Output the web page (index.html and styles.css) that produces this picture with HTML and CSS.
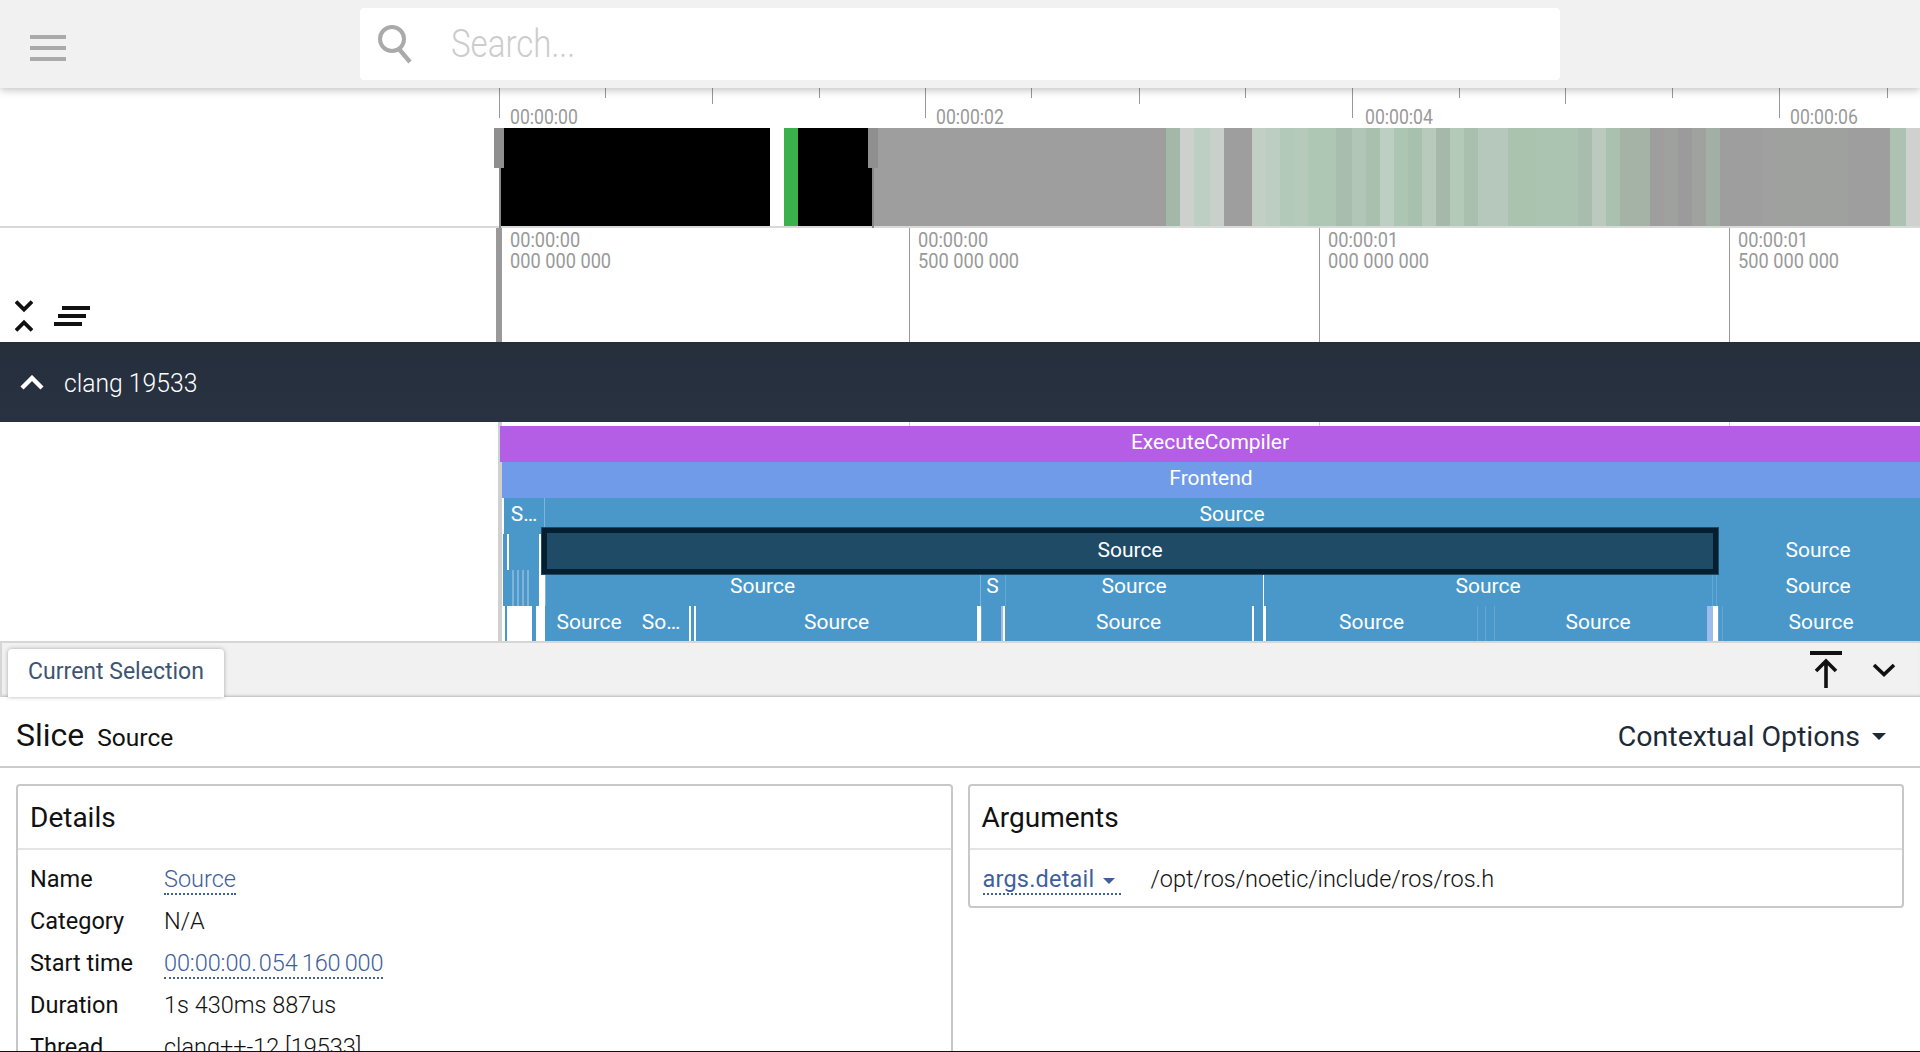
FILE: index.html
```html
<!DOCTYPE html>
<html lang="en">
<head>
<meta charset="utf-8">
<title>Perfetto UI</title>
<link rel="stylesheet" href="styles.css">
</head>
<body>
<div class="app">
  <main class="viewer">
    <section class="overview">
      <div class="tick major" style="left:499px"></div>
      <div class="tick small" style="left:605px"></div>
      <div class="tick medium" style="left:712px"></div>
      <div class="tick small" style="left:819px"></div>
      <div class="tick major" style="left:925px"></div>
      <div class="tick small" style="left:1031px"></div>
      <div class="tick medium" style="left:1139px"></div>
      <div class="tick small" style="left:1245px"></div>
      <div class="tick major" style="left:1352px"></div>
      <div class="tick small" style="left:1459px"></div>
      <div class="tick medium" style="left:1565px"></div>
      <div class="tick small" style="left:1672px"></div>
      <div class="tick major" style="left:1779px"></div>
      <div class="tick small" style="left:1887px"></div>
      <span class="time-label" style="left:510px">00:00:00</span>
      <span class="time-label" style="left:936px">00:00:02</span>
      <span class="time-label" style="left:1365px">00:00:04</span>
      <span class="time-label" style="left:1790px">00:00:06</span>
      <div class="heat">
        <i style="left:500px;width:270px;background:#000"></i>
        <i style="left:784px;width:14px;background:#3ab14a"></i>
        <i style="left:798px;width:74px;background:#000"></i>
        <i style="left:872px;width:294px;background:#9e9e9e"></i>
        <i style="left:1166px;width:14px;background:#a3b8a8"></i>
        <i style="left:1180px;width:14px;background:#cdd0cd"></i>
        <i style="left:1194px;width:16px;background:#bdcec2"></i>
        <i style="left:1210px;width:14px;background:#c9cfca"></i>
        <i style="left:1224px;width:28px;background:#9e9e9e"></i>
        <i style="left:1252px;width:14px;background:#c2cfc5"></i>
        <i style="left:1266px;width:14px;background:#bccec1"></i>
        <i style="left:1280px;width:14px;background:#b2c8b8"></i>
        <i style="left:1294px;width:14px;background:#b5cabb"></i>
        <i style="left:1308px;width:28px;background:#aec6b4"></i>
        <i style="left:1336px;width:16px;background:#a8bdad"></i>
        <i style="left:1352px;width:14px;background:#b1c6b6"></i>
        <i style="left:1366px;width:14px;background:#a9c0ae"></i>
        <i style="left:1380px;width:14px;background:#bdcec2"></i>
        <i style="left:1394px;width:14px;background:#adc6b3"></i>
        <i style="left:1408px;width:14px;background:#a8c1ae"></i>
        <i style="left:1422px;width:14px;background:#b8cabc"></i>
        <i style="left:1436px;width:14px;background:#a6b8aa"></i>
        <i style="left:1450px;width:14px;background:#b4cab9"></i>
        <i style="left:1464px;width:14px;background:#a9c0ae"></i>
        <i style="left:1478px;width:30px;background:#b6c8bb"></i>
        <i style="left:1508px;width:28px;background:#a9c3af"></i>
        <i style="left:1536px;width:42px;background:#abc4b1"></i>
        <i style="left:1578px;width:14px;background:#a8bdad"></i>
        <i style="left:1592px;width:14px;background:#bcc9bf"></i>
        <i style="left:1606px;width:14px;background:#abc1b0"></i>
        <i style="left:1620px;width:30px;background:#a5b3a7"></i>
        <i style="left:1650px;width:14px;background:#9e9e9e"></i>
        <i style="left:1664px;width:14px;background:#9fa19f"></i>
        <i style="left:1678px;width:14px;background:#9b9b9b"></i>
        <i style="left:1692px;width:14px;background:#a0a2a0"></i>
        <i style="left:1706px;width:14px;background:#a1afa4"></i>
        <i style="left:1720px;width:42px;background:#9e9e9e"></i>
        <i style="left:1762px;width:16px;background:#a0a0a0"></i>
        <i style="left:1778px;width:70px;background:#9ea19e"></i>
        <i style="left:1848px;width:42px;background:#9e9e9e"></i>
        <i style="left:1890px;width:16px;background:#adc2b2"></i>
        <i style="left:1906px;width:14px;background:#cfd1cf"></i>
      </div>
      <div class="handle-line" style="left:499px"></div>
      <div class="handle-line" style="left:872px"></div>
      <div class="handle" style="left:494px"></div>
      <div class="handle" style="left:868px"></div>
    </section>

    <section class="ruler">
      <div class="ruler-tools">
        <svg class="icon-collapse" viewBox="0 0 18 32" width="18" height="32"><path d="M1 1.500 9 9.500 17 1.500M1 30.500 9 22.500 17 30.500" fill="none" stroke="#111" stroke-width="3.800"/></svg>
        <svg class="icon-filter" viewBox="0 0 36 20" width="36" height="20"><path d="M8 0h28v4H8zM4 8h28v4H4zM0 16h28v4H0z" fill="#111"/></svg>
      </div>
      <div class="ruler-line thick"></div>
      <div class="ruler-line" style="left:909px"></div>
      <div class="ruler-line" style="left:1319px"></div>
      <div class="ruler-line" style="left:1729px"></div>
      <span class="ruler-label" style="left:510px">00:00:00<br>000 000 000</span>
      <span class="ruler-label" style="left:918px">00:00:00<br>500 000 000</span>
      <span class="ruler-label" style="left:1328px">00:00:01<br>000 000 000</span>
      <span class="ruler-label" style="left:1738px">00:00:01<br>500 000 000</span>
    </section>

    <section class="process">
      <svg class="icon-up" viewBox="0 0 24 15" width="24" height="15"><path d="M2 13 12 3 22 13" fill="none" stroke="#fff" stroke-width="4.400"/></svg>
      <span class="process-name">clang 19533</span>
    </section>

    <section class="tracks">
      <div class="track-line" style="left:909px"></div>
      <div class="track-line" style="left:1319px"></div>
      <div class="track-line" style="left:1729px"></div>
      <div class="track-grid"></div>
      <div class="slice exec" style="left:500px;width:1420px;top:4px">ExecuteCompiler</div>
      <div class="slice front" style="left:502px;width:1418px;top:40px">Frontend</div>

      <div class="slice src" style="left:504px;width:40px;top:76px">S…</div>
      <div class="slice src sep" style="left:544px;width:1376px;top:76px">Source</div>

      <div class="slice src" style="left:503px;width:4px;top:112px"></div>
      <div class="slice src" style="left:509px;width:30px;top:112px"></div>
      <div class="slice src" style="left:1716px;width:204px;top:112px">Source</div>

      <div class="slice src" style="left:503px;width:9px;top:148px"></div>
      <div class="slice streak" style="left:512px;width:18px;top:148px"></div>
      <div class="slice src" style="left:530px;width:9px;top:148px"></div>
      <div class="slice src sep" style="left:545px;width:435px;top:148px">Source</div>
      <div class="slice src sep" style="left:980px;width:25px;top:148px">S</div>
      <div class="slice src sep-faint" style="left:1005px;width:258px;top:148px">Source</div>
      <div class="slice src" style="left:1264px;width:448px;top:148px">Source</div>
      <div class="slice src sep-faint" style="left:1712px;width:4px;top:148px"></div>
      <div class="slice src sep-faint" style="left:1716px;width:204px;top:148px">Source</div>

      <div class="slice src low" style="left:505px;width:2px;top:184px"></div>
      <div class="slice src low" style="left:532px;width:4px;top:184px"></div>
      <div class="slice src low" style="left:545px;width:88px;top:184px">Source</div>
      <div class="slice src low" style="left:633px;width:56px;top:184px">So…</div>
      <div class="slice src low" style="left:691px;width:3px;top:184px"></div>
      <div class="slice src low" style="left:696px;width:281px;top:184px">Source</div>
      <div class="slice src low sep-faint" style="left:981px;width:20px;top:184px"></div>
      <div class="slice peri low" style="left:1001px;width:2px;top:184px"></div>
      <div class="slice src low" style="left:1005px;width:247px;top:184px">Source</div>
      <div class="slice src low" style="left:1254px;width:9px;top:184px"></div>
      <div class="slice src low" style="left:1266px;width:211px;top:184px">Source</div>
      <div class="slice src low sep-faint" style="left:1477px;width:8px;top:184px"></div>
      <div class="slice src low sep-faint" style="left:1485px;width:9px;top:184px"></div>
      <div class="slice src low sep-faint" style="left:1494px;width:208px;top:184px">Source</div>
      <div class="slice src low" style="left:1702px;width:5px;top:184px"></div>
      <div class="slice peri low" style="left:1707px;width:6px;top:184px"></div>
      <div class="slice src low sep-faint" style="left:1718px;width:4px;top:184px"></div>
      <div class="slice src low sep-faint" style="left:1722px;width:198px;top:184px">Source</div>

      <div class="selected">Source</div>
    </section>

    <section class="drawer">
      <header class="tabbar">
        <div class="tab">Current Selection</div>
        <div class="tab-actions">
          <svg viewBox="0 0 32 37" width="32" height="37"><path d="M0 2h32" stroke="#111" stroke-width="4" fill="none"/><path d="M16 37V11M6 20 16 10 26 20" stroke="#111" stroke-width="3.600" fill="none"/></svg>
          <svg viewBox="0 0 24 14" width="24" height="14"><path d="M2 2 12 11.500 22 2" stroke="#111" stroke-width="3.600" fill="none"/></svg>
        </div>
      </header>
      <div class="slice-head">
        <div class="slice-title"><span class="title-main">Slice</span><span class="title-sub">Source</span></div>
        <div class="context">Contextual Options<span class="caret"></span></div>
      </div>
      <div class="cards">
        <article class="card">
          <h2>Details</h2>
          <dl class="rows">
            <dt>Name</dt><dd><a class="link">Source</a></dd>
            <dt>Category</dt><dd>N/A</dd>
            <dt>Start time</dt><dd><a class="link time-link">00:00:00<span class="gap">.</span>054 160 000</a></dd>
            <dt>Duration</dt><dd>1s 430ms 887us</dd>
            <dt>Thread</dt><dd>clang++-12 [19533]</dd>
          </dl>
        </article>
        <article class="card args">
          <h2>Arguments</h2>
          <dl class="rows arg-row">
            <dt><a class="link arg-link">args.detail<span class="caret small"></span></a></dt><dd>/opt/ros/noetic/include/ros/ros.h</dd>
          </dl>
        </article>
      </div>
    </section>
  </main>

  <header class="topbar">
    <button class="menu" aria-label="Menu"><span></span><span></span><span></span></button>
    <div class="search">
      <svg viewBox="0 0 36 40" width="36" height="40"><circle cx="15" cy="15" r="12" fill="none" stroke="#aaa" stroke-width="4"/><path d="M22 25 33 38" stroke="#aaa" stroke-width="4.400" fill="none"/></svg>
      <span class="placeholder">Search...</span>
    </div>
  </header>
</div>
</body>
</html>
```
FILE: styles.css
```css
* { box-sizing: border-box; }
html, body { margin: 0; height: 100%; overflow: hidden; background: #fff; }
body { font-family: Roboto, "Liberation Sans", sans-serif; color: #111; }
.app { position: relative; width: 1920px; height: 1052px; overflow: hidden; }
.viewer { display: flex; flex-direction: column; height: 1052px; padding-top: 88px; border-bottom: 1px solid #111; }

.topbar { position: absolute; left: 0; top: 0; width: 100%; height: 88px; background: #f1f1f1; box-shadow: 0 2px 8px rgba(0,0,0,.25); display: flex; align-items: center; padding-left: 360px; }
.menu { position: absolute; left: 30px; top: 35px; width: 36px; height: 26px; padding: 0; border: 0; background: none; display: flex; flex-direction: column; justify-content: space-between; }
.menu span { display: block; height: 4px; background: #aaa; }
.search { width: 1200px; height: 72px; background: #fff; border-radius: 4px; display: flex; align-items: center; padding-left: 17px; gap: 38px; }
.placeholder { font-size: 38px; font-weight: 300; color: #ccc; transform: scaleX(.87); transform-origin: left center; }

.overview { position: relative; height: 140px; border-bottom: 2px solid #d9d9d9; flex: none; }
.tick { position: absolute; top: 0; width: 1px; background: #999; }
.tick.major { height: 30px; }
.tick.medium { height: 16px; }
.tick.small { height: 10px; }
.time-label { position: absolute; top: 17px; font-size: 20px; line-height: 24px; color: #999; transform: scaleX(.88); transform-origin: left center; }
.heat { position: absolute; left: 0; top: 40px; width: 100%; height: 98px; }
.heat i { position: absolute; top: 0; height: 100%; display: block; }
.handle { position: absolute; top: 40px; width: 10px; height: 40px; background: #8f8f8f; }
.handle-line { position: absolute; top: 80px; width: 2px; height: 60px; background: #888; }

.ruler { position: relative; height: 114px; flex: none; }
.ruler-tools { position: absolute; left: 15px; top: 72px; display: flex; gap: 21px; }
.icon-filter { margin-top: 6px; }
.ruler-line { position: absolute; top: 0; width: 1px; height: 100%; background: #999; }
.ruler-line.thick { left: 496px; width: 6px; }
.ruler-label { position: absolute; top: 2px; font-size: 20px; line-height: 21px; color: #999; transform: scaleX(.91); transform-origin: left center; white-space: nowrap; }

.process { flex: none; height: 80px; background: linear-gradient(#252e3b, #293241); display: flex; align-items: center; padding-left: 20px; gap: 20px; overflow: hidden; }
.process-name { color: #fff; font-size: 26px; font-weight: 300; height: 29px; line-height: 31px; overflow: hidden; transform: scaleX(.95); transform-origin: left center; }

.tracks { position: relative; flex: none; height: 219px; overflow: hidden; background: #fff; }
.track-grid { position: absolute; left: 498px; top: 0; width: 4px; height: 100%; background: #d0d0d0; }
.track-line { position: absolute; top: 0; width: 1px; height: 4px; background: #ccc; }
.slice { position: absolute; height: 36px; line-height: 33px; text-align: center; color: #fff; font-size: 21px; white-space: nowrap; overflow: hidden; }
.slice.low { height: 35px; }
.exec { background: #b45ee6; }
.front { background: #6f9be9; }
.src { background: #4a98c9; }
.sep { box-shadow: inset 1px 0 0 #7fb4d8; }
.sep-faint { box-shadow: inset 1px 0 0 #66a7d1; }
.streak { background: repeating-linear-gradient(90deg, #7fb4d8 0 2px, #4a98c9 2px 5px); }
.peri { background: #9dbcea; }
.selected { position: absolute; left: 541px; top: 105px; width: 1178px; height: 48px; background: #1f4b66; border: 1px solid #1f4b66; box-shadow: inset 0 0 0 5px #041f30; color: #fff; font-size: 21px; text-align: center; line-height: 45px; }

.drawer { flex: 1; min-height: 0; display: flex; flex-direction: column; overflow: hidden; }
.tabbar { flex: none; height: 56px; background: #f1f1f1; border-top: 2px solid #d6d6d6; border-left: 2px solid #d6d6d6; box-shadow: inset 0 -3px 3px -2px rgba(0,0,0,.25); display: flex; justify-content: space-between; padding-left: 6px; padding-top: 6px; }
.tab { width: 216px; background: #fff; border-radius: 4px 4px 0 0; font-size: 23px; color: #3d5570; text-align: center; line-height: 46px; box-shadow: 0 0 4px rgba(0,0,0,.3); }
.tab-actions { display: flex; align-items: flex-start; gap: 30px; padding-right: 24px; padding-top: 2px; }
.tab-actions svg:last-child { margin-top: 12px; }
.slice-head { flex: none; height: 71px; border-bottom: 2px solid #ccc; display: flex; justify-content: space-between; align-items: center; padding: 5px 34px 0 16px; }
.slice-title { display: flex; align-items: baseline; gap: 13px; margin-top: 2px; }
.title-main { font-size: 32px; }
.title-sub { font-size: 24.5px; }
.context { font-size: 28.5px; color: #1e2a38; display: flex; align-items: center; gap: 12px; margin-top: 4px; }
.caret { display: inline-block; border: 7px solid transparent; border-top-color: currentColor; border-bottom-width: 0; }
.caret.small { border-width: 6px 6px 0; margin-left: 9px; vertical-align: middle; color: #3f5f9c; }

.cards { display: flex; gap: 15px; padding: 16px 16px 0; align-items: flex-start; }
.card { flex: 1; min-width: 0; border: 2px solid #c8c8c8; border-radius: 4px; }
.card h2 { margin: 0; height: 64px; font-size: 28px; font-weight: 400; line-height: 64px; padding-left: 12px; border-bottom: 2px solid #e5e5e5; }
.rows { margin: 0; padding: 8px 12px 9px; display: grid; grid-template-columns: 134px 1fr; grid-auto-rows: 42px; font-size: 23.5px; line-height: 42px; }
.rows dt { font-weight: 400; }
.rows dd { margin: 0; font-weight: 300; }
.arg-row { grid-template-columns: 168px 1fr; padding: 8px 12px 6px 13px; }
.link { color: #3f5f9c; border-bottom: 2px dotted #3f5f9c; }
.arg-link { padding-right: 6px; letter-spacing: .2px; }
.time-link { word-spacing: -1.5px; letter-spacing: -.1px; }
.gap { margin-right: 2px; }
```
